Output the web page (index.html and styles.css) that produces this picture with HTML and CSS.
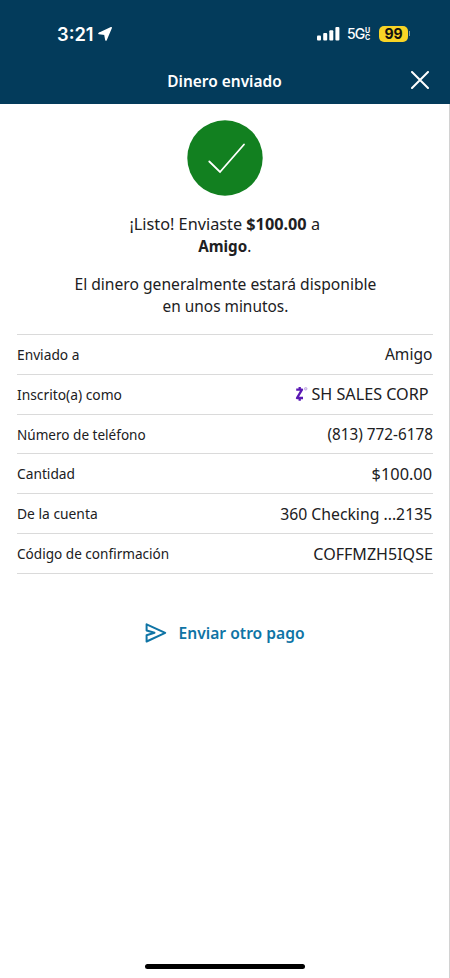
FILE: index.html
```
<!DOCTYPE html>
<html lang="es">
<head>
<meta charset="utf-8">
<meta name="viewport" content="width=device-width">
<title>Dinero enviado</title>
<link rel="stylesheet" href="styles.css">
</head>
<body>
<div class="screen">
  <header class="header">
    <div class="status">
      <div class="clock">
        <span>3:21</span>
        <svg width="14" height="14" viewBox="0 0 14 14"><path d="M13.2.8 8 13 6.9 7.3 1 6.4Z" fill="#fff" stroke="#fff" stroke-width="1.6" stroke-linejoin="round"/></svg>
      </div>
      <div class="indicators">
        <svg class="signal" width="23" height="14" viewBox="0 0 23 14" fill="#fff"><rect x="0" y="8.5" width="4" height="5" rx="1"/><rect x="6.2" y="6" width="4" height="7.5" rx="1"/><rect x="12.3" y="3.2" width="4" height="10.3" rx="1"/><rect x="18.4" y="0" width="4" height="13.5" rx="1"/></svg>
        <span class="network">5G</span>
        <span class="uc"><span>U</span><span>C</span></span>
        <span class="battery">99</span>
        <span class="battery-tip"></span>
      </div>
    </div>
    <div class="titlebar">
      <h1 class="title">Dinero enviado</h1>
      <svg class="close" width="18" height="18" viewBox="0 0 18 18"><path d="M1 1 17 17M17 1 1 17" stroke="#fff" stroke-width="2" stroke-linecap="round"/></svg>
    </div>
  </header>
  <main class="content">
    <svg class="success" width="76" height="76" viewBox="0 0 76 76"><circle cx="38" cy="38" r="37.7" fill="#128020"/><path d="M22.3 41.5 33 52 57 24.5" fill="none" stroke="#fff" stroke-width="1.8" stroke-linecap="round"/></svg>
    <p class="message">
      <span class="line sent">¡Listo! Enviaste <b>$100.00</b> a</span>
      <span class="line name"><b>Amigo</b>.</span>
    </p>
    <p class="message note">
      <span class="line wide">El dinero generalmente estará disponible</span>
      <span class="line short">en unos minutos.</span>
    </p>
    <dl class="details">
      <div class="row"><dt>Enviado a</dt><dd>Amigo</dd></div>
      <div class="row business"><dt>Inscrito(a) como</dt><dd>SH SALES CORP</dd>
        <svg class="zelle" width="14" height="16" viewBox="0 0 14 16"><path d="M1.2 3.7H7L2 12H8M4.7 1V3.7M4.7 12V14.7" fill="none" stroke="#5a18b4" stroke-width="2.3" stroke-linejoin="round"/><circle cx="10.7" cy="2.8" r="1.3" fill="#ddcff0" stroke="#b9a0df" stroke-width=".8"/></svg>
      </div>
      <div class="row phone"><dt>Número de teléfono</dt><dd>(813) 772-6178</dd></div>
      <div class="row amount"><dt>Cantidad</dt><dd>$100.00</dd></div>
      <div class="row account"><dt>De la cuenta</dt><dd>360 Checking ...2135</dd></div>
      <div class="row code"><dt>Código de confirmación</dt><dd>COFFMZH5IQSE</dd></div>
    </dl>
    <a class="again">
      <svg width="22" height="20" viewBox="0 0 22 20"><path d="M1.6 1.3 20.2 9.8 1.6 18.5V12.2L9.5 9.8 1.6 7.5Z" fill="none" stroke="#0f74a5" stroke-width="2" stroke-linejoin="round"/></svg>
      <span>Enviar otro pago</span>
    </a>
  </main>
  <div class="home"></div>
</div>
</body>
</html>
```
FILE: styles.css
```
* { box-sizing: border-box; }
body { margin: 0; background: #fff; font-family: "Noto Sans", sans-serif; color: #202022; }
.screen { height: 978px; display: flex; flex-direction: column; border-right: 1px solid #d2d2d2; }

.header { height: 104px; background: #033b5b; color: #fff; margin-right: -1px; }
.status { height: 60px; padding: 7px 42px 0 57px; display: flex; justify-content: space-between; align-items: center; font-family: Inter, sans-serif; }
.clock { display: flex; align-items: center; gap: 4px; font-size: 18.3px; font-weight: 600; }
.indicators { display: flex; align-items: center; }
.network { margin-left: 7px; width: 18px; font-size: 14px; font-weight: 500; letter-spacing: -.9px; }
.uc { display: flex; flex-direction: column; width: 6px; font-size: 7px; line-height: 7px; font-weight: 700; }
.battery { margin-left: 8px; width: 29px; height: 16px; border-radius: 5px; background: #f8d426; color: #111; font-size: 14px; line-height: 16px; font-weight: 700; text-align: center; }
.battery-tip { width: 1px; height: 5px; margin: 0 -2px 0 1px; background: #7893a3; }
.titlebar { height: 42px; padding: 0 21px 0 38px; display: flex; align-items: center; }
.title { flex: 1; margin: 0; font-size: 16px; font-weight: 600; text-align: center; transform: scaleX(.965); }
.close { margin-top: -2px; }

.content { flex: 1; padding: 16px 16px 0 17px; display: flex; flex-direction: column; align-items: center; }
.success { margin: 0 0 17px; }
.message { margin: 0; font-size: 16.5px; line-height: 22px; text-align: center; }
.message b { font-weight: 700; }
.note { margin-top: 16px; }
.line { display: block; white-space: nowrap; }
.sent { transform: scaleX(.985); }
.name { transform: scaleX(.92); }
.wide { transform: scaleX(.947); }
.short { transform: scaleX(.933); }

.details { align-self: stretch; margin: 17px 0 0; border-top: 1px solid #dadada; }
.row { height: 39.83px; padding-bottom: 1px; border-bottom: 1px solid #dadada; display: flex; align-items: center; --label: .948; --value: .942; }
.row dt { order: 1; margin-right: auto; font-size: 14.5px; transform: scaleX(var(--label)); transform-origin: left; }
.row dd { order: 3; margin: 0 .5px 0 0; font-size: 16.5px; transform: scaleX(var(--value)); transform-origin: right; }
.business { --label: .952; --value: .98; }
.business dd { margin-right: 4px; }
.zelle { order: 2; }
.phone { --label: .935; --value: .925; }
.amount { --value: .99; }
.account { --label: .953; --value: .955; }
.code { --label: .937; --value: .973; }

.again { margin: 48px 0 0 1px; display: flex; align-items: center; gap: 10px; color: #0f74a5; font-size: 16px; font-weight: 600; }
.again span { transform: scaleX(.975); }
.home { align-self: center; width: 160px; height: 5px; margin: 0 0 9px; border-radius: 3px; background: #000; }
```
